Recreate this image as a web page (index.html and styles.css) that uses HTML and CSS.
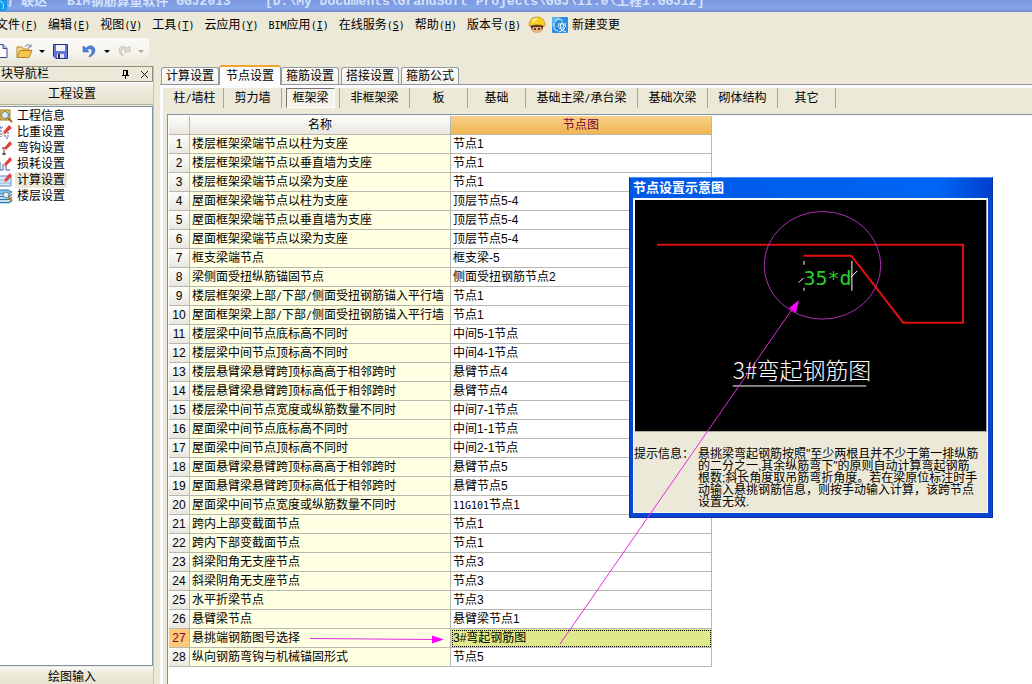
FILE: index.html
```html
<!DOCTYPE html>
<html lang="zh-CN">
<head>
<meta charset="utf-8">
<title>广联达 BIM钢筋算量软件 GGJ2013</title>
<link rel="stylesheet" href="styles.css">
</head>
<body>
<header class="titlebar">
  <svg class="app-icon" width="8" height="16" viewBox="0 0 8 16"><rect x="-8" width="15" height="15" rx="3" fill="#159be8"/><path d="M0 5q5 2 3 8" stroke="#a8e6ff" fill="none"/></svg>
  <span class="app-name">广联达</span><span class="app-product">BIM钢筋算量软件 GGJ2013</span><span>[D:\My Documents\GrandSoft Projects\GGJ\11.0\工程1.GGJ12]</span>
</header>
<nav class="menubar">
  <button>文件<span class="key">(<u>F</u>)</span></button>
  <button>编辑<span class="key">(<u>E</u>)</span></button>
  <button>视图<span class="key">(<u>V</u>)</span></button>
  <button>工具<span class="key">(<u>T</u>)</span></button>
  <button>云应用<span class="key">(<u>Y</u>)</span></button>
  <button><span class="key">BIM</span>应用<span class="key">(<u>I</u>)</span></button>
  <button>在线服务<span class="key">(<u>S</u>)</span></button>
  <button>帮助<span class="key">(<u>H</u>)</span></button>
  <button>版本号<span class="key">(<u>B</u>)</span></button>
  <button class="icon-button" aria-label="客服">
    <svg width="18" height="18" viewBox="0 0 18 18"><path d="M3 8h12v5q-1 4-6 4t-6-4z" fill="#e9b183"/><path d="M2 9l2 5 1-3h8l1 3 2-5z" fill="#5a2c24"/><path d="M7 12v2M11 12v2" stroke="#241414" stroke-width="1.500"/><path d="M1 10Q1 1 9 1t8 9q-8-3-16 0z" fill="#f5cf25" stroke="#b98a10" stroke-width=".7"/><path d="M5 6q1-3 4-3" stroke="#fff3a0" stroke-width="2" fill="none"/></svg>
  </button>
  <button class="change-button">
    <svg width="16" height="16" viewBox="0 0 16 16"><rect width="16" height="16" rx="1" fill="#2a8fe2"/><path d="M0 0h9L0 10z" fill="#5ab4f2"/><path d="M3 4q4-4 8 0M2 6v5q1 3 4 3" stroke="#d9f1ff" fill="none"/><path d="M6 7h8M10 5v2M8.500 7v3M11.500 7v3M7 8l-1 2M13 8l1 2M7 11h6q-1 2-6 4M8 11q2 3 6 4" stroke="#fff" fill="none"/></svg>
    新建变更
  </button>
</nav>
<div class="toolbar">
  <div class="tools">
    <button class="tool new" aria-label="新建"><svg width="8" height="16" viewBox="0 0 8 16"><path d="M-4 1.500h7l4 4v9H-4z" fill="#fff" stroke="#34479a"/><path d="M3 1.500v4h4" fill="#b9c7ef" stroke="#34479a"/></svg></button>
    <button class="tool open" aria-label="打开"><svg width="17" height="16" viewBox="0 0 17 16"><path d="M1 14V4h5l1 2h6v3" fill="#f8dc83" stroke="#b98632"/><path d="M1 14.500l3-7h12l-3 7z" fill="#f6c550" stroke="#bd8428"/><path d="M9 4q2-4 5-1M15 1v3h-3" fill="none" stroke="#6b8296"/></svg></button>
    <button class="drop" aria-label="打开选项"></button>
    <button class="tool save" aria-label="保存"><svg width="15" height="15" viewBox="0 0 15 15"><path d="M.5.500h14v14H3L.5 12z" fill="#6676d6" stroke="#27308e"/><path d="M3 1h9v6H3z" fill="#f1f4ff"/><path d="M4 10h7v4H4z" fill="#dfe2ed"/><path d="M5 10h2v4H5z" fill="#26305f"/></svg></button>
    <span class="tool-sep"></span>
    <button class="tool undo" aria-label="撤销"><svg width="14" height="14" viewBox="0 0 14 14"><path d="M1 2v6h6L5 6q4-3 5 1 0 3-3 5v1q6-2 6-7Q12 1 7 2L4 4z" fill="#4f80dc" stroke="#2c5ec0" stroke-width=".5"/></svg></button>
    <button class="drop" aria-label="撤销选项"></button>
    <button class="tool redo" aria-label="重做" disabled><svg width="14" height="14" viewBox="0 0 14 14"><path d="M12 2v6H6l2-2Q4 4 3 7q0 2 2 5Q1 10 1 6q1-5 6-3l3 1z" fill="#dedcd4" stroke="#bbb9b0" stroke-width=".7"/></svg></button>
    <button class="drop" aria-label="重做选项" disabled></button>
  </div>
</div>
<div class="workspace">
  <aside class="sidebar">
    <div class="side-title"><span>块导航栏</span>
      <button aria-label="固定"><svg width="9" height="10" viewBox="0 0 9 10"><path d="M2.500 1v5M2 1.500h4M1 6.500h7M4.500 7v3" stroke="#000" fill="none"/><path d="M5 1h2v5H5z"/></svg></button>
      <button aria-label="关闭"><svg width="9" height="9" viewBox="0 0 9 9"><path d="M1 1l7 7M8 1L1 8" stroke="#222"/></svg></button>
    </div>
    <button class="side-group">工程设置</button>
    <ul class="side-list">
      <li><svg width="13" height="16" viewBox="0 0 13 16"><path d="M0 2h10v10H0z" fill="#e9c44c" stroke="#a87718"/><circle cx="5" cy="7" r="3.500" fill="#d9effc" stroke="#617b92"/><path d="M8 10l4 4" stroke="#9b6b2a" stroke-width="2"/></svg><a href="#">工程信息</a></li>
      <li><svg width="13" height="16" viewBox="0 0 13 16"><path d="M1 3v10M-1 3h4M5 8v6M8 8v6h-3" stroke="#3b56a5" fill="none" stroke-dasharray="2 1"/><path d="M3 8l6-7 3 3-7 6z" fill="#e2413d"/><path d="M3 8l2 2-3 2z" fill="#eeb987"/></svg><a href="#">比重设置</a></li>
      <li><svg width="13" height="16" viewBox="0 0 13 16"><path d="M2 8h4M4 8v7M2 14h4" stroke="#222" fill="none"/><path d="M4 8l6-7 2 3-6 6z" fill="#e2413d"/><path d="M4 8l2 2-3 2z" fill="#eeb987"/></svg><a href="#">弯钩设置</a></li>
      <li><svg width="13" height="16" viewBox="0 0 13 16"><path d="M0 6v8h3V8M6 9v5h4" stroke="#3b56a5" fill="none"/><path d="M4 8l6-7 2 3-6 6z" fill="#e2413d"/><path d="M4 8l2 2-3 2z" fill="#eeb987"/></svg><a href="#">损耗设置</a></li>
      <li class="current"><svg width="13" height="16" viewBox="0 0 13 16"><path d="M-1 4h12v10H-1z" fill="#d9ebff" stroke="#6287c1"/><path d="M0 8h9M0 11h10" stroke="#8ab2e0"/><path d="M4 8l6-7 2 3-6 6z" fill="#e2413d"/><path d="M4 8l2 2-3 2z" fill="#eeb987"/></svg><a href="#">计算设置</a></li>
      <li><svg width="13" height="16" viewBox="0 0 13 16"><path d="M-1 2h9l4 2-3 2H-1z" fill="#8cc8e8" stroke="#267ab2"/><path d="M-1 8.500h10l3-2M-1 11.500h10l3-2M-1 14.500h10l3-2" fill="none" stroke="#267ab2" stroke-width="1.500"/><circle cx="6" cy="7" r="3" fill="#d6efff" stroke="#6d8195"/><path d="M8 9l4 4" stroke="#bd7b31" stroke-width="2"/></svg><a href="#">楼层设置</a></li>
    </ul>
    <button class="side-group bottom">绘图输入</button>
  </aside>
  <main class="content">
    <div class="tabs">
      <button>计算设置</button><button class="active">节点设置</button><button>箍筋设置</button><button>搭接设置</button><button>箍筋公式</button>
    </div>
    <div class="page">
      <div class="subtabs">
        <span class="w58"><button>柱<i class="key">/</i>墙柱</button></span><span class="w58"><button>剪力墙</button></span><span class="w58"><button class="pressed">框架梁</button></span><span class="w70"><button>非框架梁</button></span><span class="w58"><button>板</button></span><span class="w58"><button>基础</button></span><span class="w112"><button>基础主梁<i class="key">/</i>承台梁</button></span><span class="w70"><button>基础次梁</button></span><span class="w70"><button>砌体结构</button></span><span class="w58"><button>其它</button></span>
      </div>
      <div class="grid-frame">
        <table class="grid">
          <colgroup><col class="c-num"><col class="c-name"><col class="c-node"></colgroup>
          <thead><tr><th></th><th>名称</th><th class="sorted">节点图</th></tr></thead>
          <tbody>
            <tr><th>1</th><td>楼层框架梁端节点以柱为支座</td><td>节点1</td></tr>
            <tr><th>2</th><td>楼层框架梁端节点以垂直墙为支座</td><td>节点1</td></tr>
            <tr><th>3</th><td>楼层框架梁端节点以梁为支座</td><td>节点1</td></tr>
            <tr><th>4</th><td>屋面框架梁端节点以柱为支座</td><td>顶层节点5-4</td></tr>
            <tr><th>5</th><td>屋面框架梁端节点以垂直墙为支座</td><td>顶层节点5-4</td></tr>
            <tr><th>6</th><td>屋面框架梁端节点以梁为支座</td><td>顶层节点5-4</td></tr>
            <tr><th>7</th><td>框支梁端节点</td><td>框支梁-5</td></tr>
            <tr><th>8</th><td>梁侧面受扭纵筋锚固节点</td><td>侧面受扭钢筋节点2</td></tr>
            <tr><th>9</th><td>楼层框架梁上部<i class="key">/</i>下部<i class="key">/</i>侧面受扭钢筋锚入平行墙</td><td>节点1</td></tr>
            <tr><th>10</th><td>屋面框架梁上部<i class="key">/</i>下部<i class="key">/</i>侧面受扭钢筋锚入平行墙</td><td>节点1</td></tr>
            <tr><th>11</th><td>楼层梁中间节点底标高不同时</td><td>中间5-1节点</td></tr>
            <tr><th>12</th><td>楼层梁中间节点顶标高不同时</td><td>中间4-1节点</td></tr>
            <tr><th>13</th><td>楼层悬臂梁悬臂跨顶标高高于相邻跨时</td><td>悬臂节点4</td></tr>
            <tr><th>14</th><td>楼层悬臂梁悬臂跨顶标高低于相邻跨时</td><td>悬臂节点4</td></tr>
            <tr><th>15</th><td>楼层梁中间节点宽度或纵筋数量不同时</td><td>中间7-1节点</td></tr>
            <tr><th>16</th><td>屋面梁中间节点底标高不同时</td><td>中间1-1节点</td></tr>
            <tr><th>17</th><td>屋面梁中间节点顶标高不同时</td><td>中间2-1节点</td></tr>
            <tr><th>18</th><td>屋面悬臂梁悬臂跨顶标高高于相邻跨时</td><td>悬臂节点5</td></tr>
            <tr><th>19</th><td>屋面悬臂梁悬臂跨顶标高低于相邻跨时</td><td>悬臂节点5</td></tr>
            <tr><th>20</th><td>屋面梁中间节点宽度或纵筋数量不同时</td><td><span class="key">11G101</span>节点1</td></tr>
            <tr><th>21</th><td>跨内上部变截面节点</td><td>节点1</td></tr>
            <tr><th>22</th><td>跨内下部变截面节点</td><td>节点1</td></tr>
            <tr><th>23</th><td>斜梁阳角无支座节点</td><td>节点3</td></tr>
            <tr><th>24</th><td>斜梁阴角无支座节点</td><td>节点3</td></tr>
            <tr><th>25</th><td>水平折梁节点</td><td>节点3</td></tr>
            <tr><th>26</th><td>悬臂梁节点</td><td>悬臂梁节点1</td></tr>
            <tr class="selected"><th>27</th><td>悬挑端钢筋图号选择</td><td>3#弯起钢筋图</td></tr>
            <tr><th>28</th><td>纵向钢筋弯钩与机械锚固形式</td><td>节点5</td></tr>
          </tbody>
        </table>
      </div>
    </div>
  </main>
</div>
<section class="dialog">
  <h2>节点设置示意图</h2>
  <div class="dialog-body">
    <svg class="drawing" viewBox="635 200 352 232">
      <path d="M657 245H964V323H904L852 256H804" fill="none" stroke="#e01010" stroke-width="2"/>
      <path d="M804.500 261v4M804.500 288v3M852.500 261v30M799 283l5-5M852 277l6-6" fill="none" stroke="#fff"/>
      <text class="cad-dim" x="804" y="285">35*d</text>
      <text class="cad-name" x="733" y="380">3#</text><text class="cad-name" x="757" y="380">弯起钢筋图</text>
      <path d="M733 386.500H867" stroke="#fff"/>
      <ellipse cx="823" cy="265.500" rx="58.500" ry="54" fill="none" stroke="#b02cb8"/>
    </svg>
    <div class="hint"><span>提示信息：</span><p>悬挑梁弯起钢筋按照"至少两根且并不少于第一排纵筋<br>的二分之一,其余纵筋弯下"的原则自动计算弯起钢筋<br>根数;斜长角度取吊筋弯折角度。若在梁原位标注时手<br>动输入悬挑钢筋信息，则按手动输入计算，该跨节点<br>设置无效.</p></div>
  </div>
</section>
<svg class="annotations" width="1032" height="684" viewBox="0 0 1032 684" aria-hidden="true">
  <path d="M310 638.500L434 639.500M560 644L793 308" stroke="#e02ce0" fill="none"/>
  <path d="M444 639.500l-12-4v8zM799 300l-10 8 7 5z" fill="#ff00ff"/>
</svg>
</body>
</html>
```
FILE: styles.css
```css
* { box-sizing: border-box; }
body {
  margin: 0; height: 100vh; overflow: hidden; position: relative;
  display: flex; flex-direction: column;
  background: #ece9d8; color: #000;
  font: 12px/16px "Liberation Sans", "Noto Sans CJK SC", sans-serif;
}
button { font: inherit; color: inherit; background: none; border: 0; padding: 0; margin: 0; white-space: nowrap; }
svg { display: block; flex: none; }
.key { font-family: "DejaVu Sans Mono", monospace; font-size: 10px; font-style: normal; line-height: 1; }

.titlebar {
  height: 12px; flex: none; overflow: hidden; display: flex; align-items: flex-end;
  padding-bottom: 3px;
  background: linear-gradient(#7d97e0, #83a5e8 70%, #7788d0);
  color: #d3e2fa; font: bold 13px/14px "Liberation Mono", "Noto Sans CJK SC", monospace; white-space: pre;
}
.app-icon { margin-bottom: -3px; }
.app-name { width: 59px; }
.app-product { width: 198px; }

.menubar { display: flex; align-items: center; gap: 10px; height: 26px; flex: none; margin-left: -4px; }
.icon-button { margin-left: -3px; }
.change-button { display: flex; align-items: center; gap: 4px; margin-left: -4px; }

.toolbar { height: 27px; flex: none; }
.tools {
  display: flex; align-items: center; width: 149px; height: 26px;
  background: linear-gradient(#fbfaf8, #f4f3ec 60%, #e8e5d6); border-radius: 0 3px 3px 0;
}
.new { margin-right: 8px; }
.drop { width: 0; height: 0; margin: 0 6px; border: 3px solid transparent; border-top-color: #000; border-bottom: 0; }
.drop:disabled { border-top-color: #aaa89e; }
.save { margin-left: 2px; }
.tool-sep { width: 1px; height: 22px; margin: 0 7px; background: #b5b2a2; }
.redo { margin-left: 2px; }
.undo { margin-right: 2px; }

.workspace { flex: 1; min-height: 0; display: flex; gap: 6px; }
.sidebar { width: 154px; flex: none; display: flex; flex-direction: column; border-right: 1px solid #c9c6b8; }
.side-title {
  display: flex; align-items: center; gap: 10px; height: 16px; margin-top: 1px; padding: 0 3px 0 1px;
  border: 1px solid #8d8a7c; border-left: 0;
}
.side-title span { flex: 1; }
.side-group {
  height: 23px; margin-bottom: 1px; padding-right: 9px; flex: none;
  background: linear-gradient(#f6f5ef, #ece9d8 40%, #e8e4d2);
  border-top: 1px solid #fff; border-bottom: 1px solid #b5b2a2;
}
.side-list {
  flex: 1; margin: 0; padding: 1px 0; list-style: none; background: #fff;
  border: 1px solid #7f93a6; border-left: 0;
}
.side-list li { display: flex; height: 16px; gap: 2px; }
.side-list a { color: #000; text-decoration: none; padding: 0 2px; }
.current a { background: #ece9d8; }
.side-group.bottom { height: 17px; margin: 1px 0 0; padding-top: 1px; border-bottom: 0; }

.content { flex: 1; min-width: 0; display: flex; flex-direction: column; }
.tabs { display: flex; align-items: flex-end; height: 20px; gap: 2px; padding-left: 1px; flex: none; border-bottom: 1px solid #9494a4; }
.tabs button {
  height: 17px; padding: 0 4px; line-height: 16px;
  border: 1px solid #919b9c; border-bottom: 0; border-radius: 3px 3px 0 0;
  background: linear-gradient(#fff, #f1f0e8);
}
.tabs .active {
  height: 20px; padding: 0 6px; margin: 0 -2px -1px; background: #fcfcfe;
  border-top: 2px solid #f2a52c; line-height: 18px;
}
.page { flex: 1; min-height: 0; display: flex; flex-direction: column; border-left: 3px solid #fcfcfe; border-top: 3px solid #fcfcfe; }
.subtabs { display: flex; height: 26px; flex: none; padding-left: 3px; }
.subtabs span { display: flex; justify-content: center; height: 20px; border-right: 1px solid #aaa799; }
.w58 { width: 58px; }
.w70 { width: 70px; }
.w112 { width: 112px; }
.subtabs button { padding: 0 5px; height: 20px; }
.subtabs .pressed { border: 1px solid #fff; border-top-color: #75736a; border-left-color: #75736a; background: #f5f3ea; }

.grid-frame { flex: 1; min-height: 0; margin-left: 4px; padding: 1px; background: #fff; border: 1px solid #7f93a6; border-right: 0; border-bottom: 0; }
.grid { width: 543px; table-layout: fixed; border-collapse: separate; border-spacing: 0; }
.c-num { width: 21px; }
.c-name, .c-node { width: 261px; }
.grid th, .grid td {
  height: 19px; padding: 0 2px; line-height: 16px; font-weight: normal; white-space: nowrap;
  border-right: 1px solid #b8b8b0; border-bottom: 1px solid #b8b8b0;
}
.grid td { text-align: left; }
.grid th { padding: 0; background: linear-gradient(#fdfdfb, #e9e7df); }
.grid td:nth-child(2) { background: #ffffe1; }
.grid thead .sorted { background: linear-gradient(#f9d089, #efb54f); color: #7c003c; }
.grid .selected th { background: #ffc978; color: #7c003c; }
.grid .selected td:last-child { background: #dfe88a; outline: 1px dotted #000; outline-offset: -2px; }

.dialog {
  position: absolute; left: 629px; top: 177px; width: 364px; display: flex; flex-direction: column;
  background: #0a46d4; border: 1px solid #0831a4; border-top-color: #4c96f4; padding: 0 4px 4px 3px;
}
.dialog h2 {
  margin: 0 -4px 0 -3px; padding: 2px 3px; height: 20px; color: #fff; font-size: 13px; line-height: 16px;
  background: linear-gradient(90deg, #0058e6, #0065f5 85%, #0040cc);
}
.dialog-body { background: #ece9d8; border: 1px solid #f8f7f0; }
.drawing { width: 100%; background: #000; border: 1px solid #aca899; border-top-color: #fff; border-left-color: #fff; }
.cad-dim { font: 20px "DejaVu Sans Mono", monospace; fill: #28d028; font-weight: 200; }
.cad-name { font: 300 23px "Noto Sans CJK SC", sans-serif; fill: #fff; }
.hint { display: flex; height: 80px; padding-top: 16px; line-height: 12px; white-space: nowrap; }
.hint span { width: 64px; }
.hint p { margin: 0; }

.annotations { position: absolute; left: 0; top: 0; pointer-events: none; }
```
